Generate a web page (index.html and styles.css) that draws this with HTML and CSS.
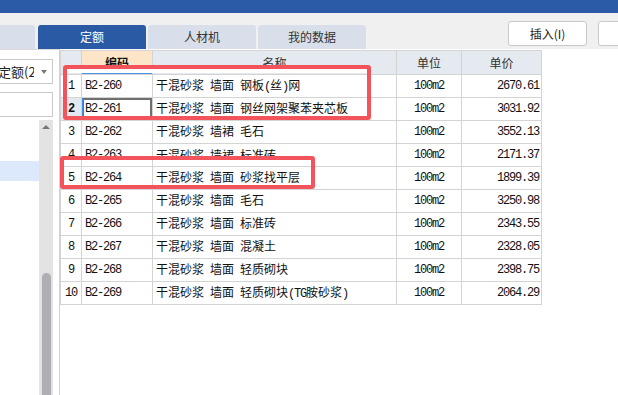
FILE: index.html
```html
<!DOCTYPE html>
<html lang="zh-CN">
<head>
<meta charset="utf-8">
<title>定额</title>
<link rel="stylesheet" href="styles.css">
</head>
<body>
<div class="app">
  <div class="titlebar"></div>
  <div class="toolbar">
    <div class="tabs">
      <div class="tab tab-cut"></div>
      <div class="tab active">定额</div>
      <div class="tab">人材机</div>
      <div class="tab">我的数据</div>
    </div>
    <div class="actions">
      <button class="btn">插入(I)</button>
      <button class="btn"></button>
    </div>
  </div>
  <div class="main">
    <aside class="side">
      <div class="select"><span class="select-text">定额(2021)</span><span class="caret"></span></div>
      <div class="input"></div>
      <div class="tree">
        <div class="tree-list"><div class="tree-sel"></div></div>
        <div class="vscroll"><span class="up"></span><span class="thumb"></span></div>
      </div>
    </aside>
    <section class="grid">
      <table class="table">
        <colgroup>
          <col class="c-no"><col class="c-code"><col class="c-name"><col class="c-unit"><col class="c-price">
        </colgroup>
        <thead>
          <tr>
            <th class="h-no"></th>
            <th class="h-code">编码</th>
            <th>名称</th>
            <th>单位</th>
            <th>单价</th>
          </tr>
        </thead>
        <tbody>
          <tr><td class="no">1</td><td class="code">B2-260</td><td class="nm">干混砂浆<i class="h"> </i>墙面<i class="h"> </i>钢板<i class="h">(</i>丝<i class="h">)</i>网</td><td class="unit">100m2</td><td class="price">2670.61</td></tr>
          <tr><td class="no cur">2</td><td class="code sel">B2-261</td><td class="nm">干混砂浆<i class="h"> </i>墙面<i class="h"> </i>钢丝网架聚苯夹芯板</td><td class="unit">100m2</td><td class="price">3031.92</td></tr>
          <tr><td class="no">3</td><td class="code">B2-262</td><td class="nm">干混砂浆<i class="h"> </i>墙裙<i class="h"> </i>毛石</td><td class="unit">100m2</td><td class="price">3552.13</td></tr>
          <tr><td class="no cut"><span class="clip">4</span></td><td class="code cut"><span class="clip">B2-263</span></td><td class="nm cut"><span class="clip">干混砂浆<i class="h"> </i>墙裙<i class="h"> </i>标准砖</span></td><td class="unit">100m2</td><td class="price">2171.37</td></tr>
          <tr><td class="no">5</td><td class="code">B2-264</td><td class="nm">干混砂浆<i class="h"> </i>墙面<i class="h"> </i>砂浆找平层</td><td class="unit">100m2</td><td class="price">1899.39</td></tr>
          <tr><td class="no">6</td><td class="code">B2-265</td><td class="nm">干混砂浆<i class="h"> </i>墙面<i class="h"> </i>毛石</td><td class="unit">100m2</td><td class="price">3250.98</td></tr>
          <tr><td class="no">7</td><td class="code">B2-266</td><td class="nm">干混砂浆<i class="h"> </i>墙面<i class="h"> </i>标准砖</td><td class="unit">100m2</td><td class="price">2343.55</td></tr>
          <tr><td class="no">8</td><td class="code">B2-267</td><td class="nm">干混砂浆<i class="h"> </i>墙面<i class="h"> </i>混凝土</td><td class="unit">100m2</td><td class="price">2328.05</td></tr>
          <tr><td class="no">9</td><td class="code">B2-268</td><td class="nm">干混砂浆<i class="h"> </i>墙面<i class="h"> </i>轻质砌块</td><td class="unit">100m2</td><td class="price">2398.75</td></tr>
          <tr><td class="no">10</td><td class="code">B2-269</td><td class="nm">干混砂浆<i class="h"> </i>墙面<i class="h"> </i>轻质砌块<i class="h">(TG</i>胺砂浆<i class="h">)</i></td><td class="unit">100m2</td><td class="price">2064.29</td></tr>
        </tbody>
      </table>
      <div class="mark mark1"></div>
      <div class="mark mark2"></div>
    </section>
  </div>
</div>
</body>
</html>
```

FILE: styles.css
```css
* { box-sizing: border-box; }

html, body {
  margin: 0;
  padding: 0;
  width: 618px;
  height: 395px;
  overflow: hidden;
  background: #fff;
  font-family: "Noto Sans CJK SC", "Liberation Sans", sans-serif;
  font-size: 12px;
  color: #222;
}

.app {
  display: flex;
  flex-direction: column;
  height: 395px;
}

.titlebar {
  height: 13px;
  background: #2b5ba7;
  flex-shrink: 0;
}

.toolbar {
  height: 36px;
  flex-shrink: 0;
  background: #f0f0f0;
  display: flex;
  align-items: flex-start;
}

.tabs {
  display: flex;
  align-items: flex-end;
  gap: 2px;
  height: 36px;
}

.tab {
  width: 108px;
  height: 24px;
  background: #d9dfea;
  border-radius: 3px 3px 0 0;
  text-align: center;
  line-height: 24px;
  font-size: 12px;
  color: #333;
  flex-shrink: 0;
}

.tab-cut {
  width: 35px;
  margin-right: 1px;
  border-radius: 0 3px 0 0;
}

.tab.active {
  background: #2b5aa5;
  color: #fff;
}

.actions {
  display: flex;
  gap: 11px;
  margin-left: 142px;
  padding-top: 8px;
  flex-shrink: 0;
}

.btn {
  width: 79px;
  height: 25px;
  flex-shrink: 0;
  padding: 0;
  background: #fff;
  border: 1px solid #c9c9c9;
  border-radius: 3px;
  font-family: "Noto Sans CJK SC", "Liberation Sans", sans-serif;
  font-size: 12px;
  color: #222;
}

.main {
  flex: 1;
  display: flex;
  min-height: 0;
}

.side {
  width: 60px;
  flex-shrink: 0;
  border-right: 1px solid #d2d2d2;
  border-top: 1px solid #dadada;
  display: flex;
  flex-direction: column;
}

.select {
  margin-top: 9px;
  margin-left: -1px;
  width: 54px;
  height: 25px;
  border: 1px solid #c9c9c9;
  background: #fff;
  display: flex;
  align-items: center;
  padding-right: 5px;
}

.select-text {
  width: 36px;
  margin-left: -2px;
  overflow: hidden;
  white-space: nowrap;
  font-size: 13px;
  line-height: 23px;
  color: #222;
}

.caret {
  margin-left: auto;
  width: 0;
  height: 0;
  border-left: 3px solid transparent;
  border-right: 3px solid transparent;
  border-top: 4px solid #777;
}

.input {
  margin-top: 8px;
  margin-left: -1px;
  width: 54px;
  height: 25px;
  border: 1px solid #c9c9c9;
  background: #fff;
}

.tree {
  flex: 1;
  margin-top: 3px;
  display: flex;
  padding-right: 6px;
  min-height: 0;
}

.tree-list {
  flex: 1;
}

.tree-sel {
  margin-top: 41px;
  height: 20px;
  background: #dce9fc;
}

.vscroll {
  width: 14px;
  background: #e3e3e3;
  display: flex;
  flex-direction: column;
  align-items: center;
}

.up {
  margin-top: 5px;
  width: 0;
  height: 0;
  border-left: 4px solid transparent;
  border-right: 4px solid transparent;
  border-bottom: 4px solid #777;
}

.thumb {
  margin-top: auto;
  width: 9px;
  height: 122px;
  background: #adafb3;
  border-radius: 5px 5px 0 0;
}

.grid {
  flex: 1;
  position: relative;
  padding-top: 1px;
  background: #fff;
}

.table {
  border-collapse: collapse;
  table-layout: fixed;
  width: 482px;
}

.c-no { width: 21px; }
.c-code { width: 71px; }
.c-name { width: 244px; }
.c-unit { width: 65px; }
.c-price { width: 80px; }

.table th,
.table td {
  box-sizing: content-box;
  border: 1px solid #d4d4d4;
  padding: 0;
  white-space: nowrap;
  overflow: hidden;
  vertical-align: middle;
}

.table th {
  height: 23px;
  background: #e5eaf1;
  font-weight: normal;
  font-size: 12px;
  line-height: 14px;
  color: #333;
  text-align: center;
}

.table th.h-code {
  background: #fde6c8;
  font-weight: bold;
  color: #111;
  box-shadow: inset 0 -1px 0 #4a94e6;
}

.table td {
  height: 22px;
  line-height: 14px;
  font-size: 12px;
  color: #111;
}

.no,
.code,
.unit,
.price {
  font-family: "Liberation Mono", monospace;
  letter-spacing: -1.2px;
}

.no { text-align: center; }
.no.cur { background: #e3e9f1; font-weight: bold; }

.table td.code { padding-left: 3px; }

.code.sel {
  box-shadow: inset 1px 0 0 #3e8ee8, inset 0 0 0 2px #6f6f6f;
}

.table td.nm {
  padding-left: 3px;
  font-family: "Noto Sans CJK SC", sans-serif;
}

.h {
  font-style: normal;
  font-family: "Liberation Mono", monospace;
  letter-spacing: -1.2px;
}

.unit { text-align: center; }
.table td.price { text-align: right; padding-right: 2px; }

.table td.cut {
  vertical-align: top;
  height: 18px;
  padding-top: 4px;
}

.clip {
  display: block;
  height: 8px;
  overflow: hidden;
  line-height: 14px;
}

.mark {
  position: absolute;
  border: 4px solid #f3545b;
  border-radius: 3px;
}

.mark1 {
  left: 3px;
  top: 16px;
  width: 308px;
  height: 55px;
}

.mark1::before {
  content: "";
  position: absolute;
  left: 0;
  right: 0;
  top: 0;
  height: 4px;
  background: #fff;
}

.mark2 {
  left: 0;
  top: 107px;
  width: 255px;
  height: 33px;
}
```
